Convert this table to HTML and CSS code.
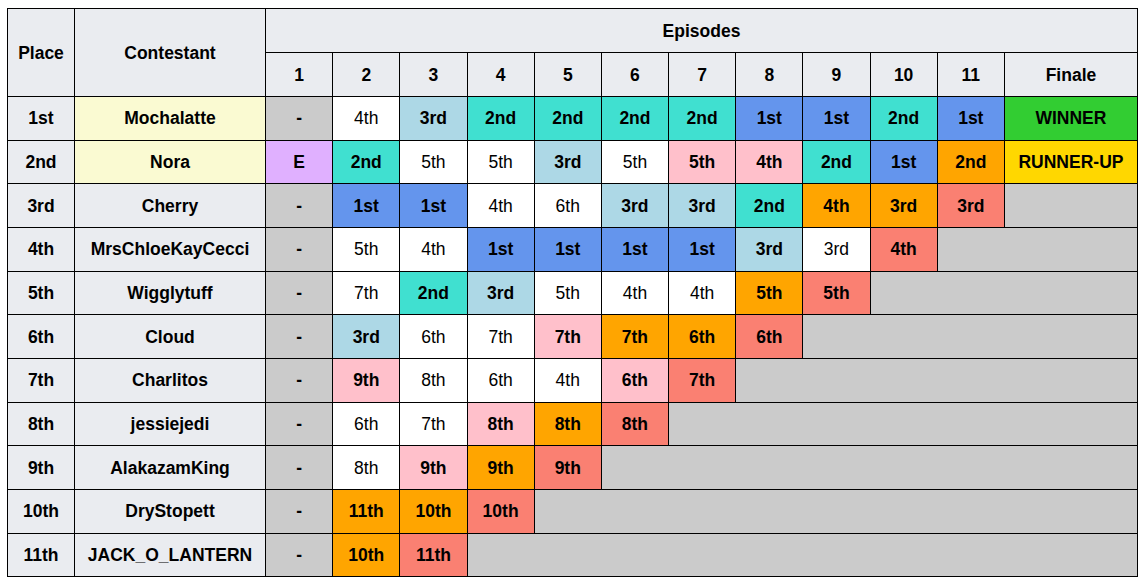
FILE: index.html
```html
<!DOCTYPE html>
<html>
<head>
<meta charset="utf-8">
<link rel="stylesheet" href="styles.css">
</head>
<body>
<table class="results">
  <colgroup>
    <col class="col-place"><col class="col-name">
    <col class="col-ep"><col class="col-ep"><col class="col-ep"><col class="col-ep"><col class="col-ep"><col class="col-ep"><col class="col-ep"><col class="col-ep"><col class="col-ep"><col class="col-ep"><col class="col-ep">
    <col class="col-fin">
  </colgroup>
  <thead>
    <tr class="hrow">
      <th rowspan="2">Place</th>
      <th rowspan="2">Contestant</th>
      <th colspan="12">Episodes</th>
    </tr>
    <tr class="hrow">
      <th>1</th><th>2</th><th>3</th><th>4</th><th>5</th><th>6</th><th>7</th><th>8</th><th>9</th><th>10</th><th>11</th><th>Finale</th>
    </tr>
  </thead>
  <tbody>
    <tr>
      <th>1st</th><td class="name win-name">Mochalatte</td>
      <td class="gray">-</td><td class="white">4th</td><td class="lb">3rd</td><td class="tq">2nd</td><td class="tq">2nd</td><td class="tq">2nd</td><td class="tq">2nd</td><td class="blue">1st</td><td class="blue">1st</td><td class="tq">2nd</td><td class="blue">1st</td><td class="win">WINNER</td>
    </tr>
    <tr>
      <th>2nd</th><td class="name win-name">Nora</td>
      <td class="mauve">E</td><td class="tq">2nd</td><td class="white">5th</td><td class="white">5th</td><td class="lb">3rd</td><td class="white">5th</td><td class="pink">5th</td><td class="pink">4th</td><td class="tq">2nd</td><td class="blue">1st</td><td class="or">2nd</td><td class="ru">RUNNER-UP</td>
    </tr>
    <tr>
      <th>3rd</th><td class="name">Cherry</td>
      <td class="gray">-</td><td class="blue">1st</td><td class="blue">1st</td><td class="white">4th</td><td class="white">6th</td><td class="lb">3rd</td><td class="lb">3rd</td><td class="tq">2nd</td><td class="or">4th</td><td class="or">3rd</td><td class="salmon">3rd</td><td class="gray"></td>
    </tr>
    <tr>
      <th>4th</th><td class="name">MrsChloeKayCecci</td>
      <td class="gray">-</td><td class="white">5th</td><td class="white">4th</td><td class="blue">1st</td><td class="blue">1st</td><td class="blue">1st</td><td class="blue">1st</td><td class="lb">3rd</td><td class="white">3rd</td><td class="salmon">4th</td><td class="gray" colspan="2"></td>
    </tr>
    <tr>
      <th>5th</th><td class="name">Wigglytuff</td>
      <td class="gray">-</td><td class="white">7th</td><td class="tq">2nd</td><td class="lb">3rd</td><td class="white">5th</td><td class="white">4th</td><td class="white">4th</td><td class="or">5th</td><td class="salmon">5th</td><td class="gray" colspan="3"></td>
    </tr>
    <tr>
      <th>6th</th><td class="name">Cloud</td>
      <td class="gray">-</td><td class="lb">3rd</td><td class="white">6th</td><td class="white">7th</td><td class="pink">7th</td><td class="or">7th</td><td class="or">6th</td><td class="salmon">6th</td><td class="gray" colspan="4"></td>
    </tr>
    <tr>
      <th>7th</th><td class="name">Charlitos</td>
      <td class="gray">-</td><td class="pink">9th</td><td class="white">8th</td><td class="white">6th</td><td class="white">4th</td><td class="pink">6th</td><td class="salmon">7th</td><td class="gray" colspan="5"></td>
    </tr>
    <tr>
      <th>8th</th><td class="name">jessiejedi</td>
      <td class="gray">-</td><td class="white">6th</td><td class="white">7th</td><td class="pink">8th</td><td class="or">8th</td><td class="salmon">8th</td><td class="gray" colspan="6"></td>
    </tr>
    <tr>
      <th>9th</th><td class="name">AlakazamKing</td>
      <td class="gray">-</td><td class="white">8th</td><td class="pink">9th</td><td class="or">9th</td><td class="salmon">9th</td><td class="gray" colspan="7"></td>
    </tr>
    <tr>
      <th>10th</th><td class="name">DryStopett</td>
      <td class="gray">-</td><td class="or">11th</td><td class="or">10th</td><td class="salmon">10th</td><td class="gray" colspan="8"></td>
    </tr>
    <tr>
      <th>11th</th><td class="name">JACK_O_LANTERN</td>
      <td class="gray">-</td><td class="or">10th</td><td class="salmon">11th</td><td class="gray" colspan="9"></td>
    </tr>
  </tbody>
</table>
</body>
</html>
```
FILE: styles.css
```css
html, body {
  background: #ffffff;
}
body {
  margin: 8px 8px 8px 7px;
  font-family: "Liberation Sans", Arial, sans-serif;
  font-size: 17.5px;
  color: #000;
}
.results {
  width: 100%;
  border-collapse: collapse;
  table-layout: fixed;
}
.col-place { width: 67px; }
.col-name { width: 191px; }
.col-ep { width: 67.18px; }
.col-fin { width: auto; }
.results th,
.results td {
  border: 1px solid #000;
  padding: 0 4px;
  text-align: center;
  vertical-align: middle;
  font-weight: bold;
  white-space: nowrap;
  line-height: 20px;
}
.results th {
  background: #eaecf0;
}
.hrow { height: 44px; }
.results tbody tr { height: 43.67px; }
.results .name { background: #eaecf0; }
.results .win-name { background: #fafad2; }
.results .gray { background: #cbcbcb; }
.results .white { background: #ffffff; font-weight: normal; }
.results .lb { background: #add8e6; }
.results .tq { background: #40e0d0; }
.results .blue { background: #6495ed; }
.results .or { background: #ffa500; }
.results .pink { background: #ffc0cb; }
.results .salmon { background: #fa8072; }
.results .mauve { background: #e0b0ff; }
.results .win { background: #32cd32; }
.results .ru { background: #ffd700; }
```
